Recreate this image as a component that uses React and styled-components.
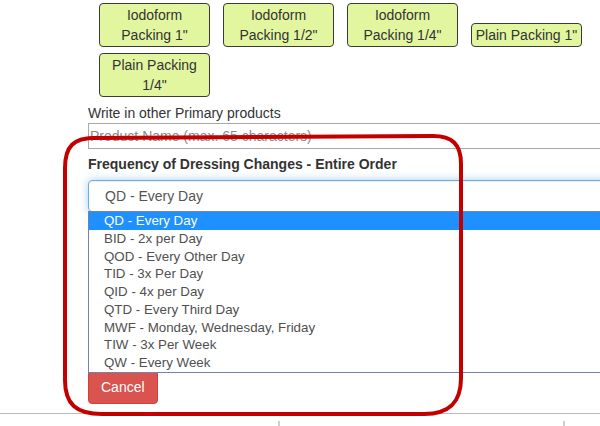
import React from "react";
import styled, { createGlobalStyle } from "styled-components";

const GlobalStyle = createGlobalStyle`
  html, body {
    margin: 0;
    padding: 0;
    background: #fff;
    overflow: hidden;
  }
  body {
    font-family: "Liberation Sans", Arial, sans-serif;
    font-size: 14px;
    line-height: 20px;
    color: #333;
  }
  * { box-sizing: border-box; }
`;

const Page = styled.div`
  position: relative;
  width: 600px;
  height: 426px;
  overflow: hidden;
`;

const Content = styled.div`
  padding: 3px 0 0 88px;
  width: 720px;
`;

const ButtonGrid = styled.div`
  display: flex;
  flex-wrap: wrap;
  align-items: flex-end;
  gap: 6px 13px;
  margin-left: 11px;
  width: 500px;
`;

const ProductButton = styled.div`
  width: 111px;
  padding: 1px 3px;
  border: 1px solid #3a3a3a;
  border-radius: 4px;
  background: #e2f6a0;
  color: #333;
  font-size: 14px;
  line-height: 20px;
  text-align: center;
`;

const FieldLabel = styled.div`
  margin-top: ${(p) => p.$top}px;
  font-size: 14px;
  line-height: 20px;
  font-weight: ${(p) => (p.$bold ? 700 : 400)};
  color: #333;
`;

const TextInput = styled.input`
  display: block;
  width: 560px;
  height: 26px;
  margin-top: 0;
  padding: 1px 1px;
  border: 1px solid #a9a9a9;
  font-family: "Liberation Sans", Arial, sans-serif;
  font-size: 14px;
  color: #333;
  outline: none;
  &::placeholder {
    color: #8a8a8a;
  }
`;

const SelectWrap = styled.div`
  position: relative;
  margin-top: 6px;
  width: 560px;
`;

const SelectBox = styled.div`
  height: 32px;
  padding-left: 16px;
  border: 1px solid #66afe9;
  border-radius: 4px;
  box-shadow: inset 0 1px 1px rgba(0, 0, 0, 0.075), 0 0 8px rgba(102, 175, 233, 0.6);
  font-size: 14px;
  line-height: 30px;
  color: #555;
`;

const DropdownList = styled.ul`
  position: absolute;
  top: calc(100% - 1px);
  left: 0;
  right: 0;
  margin: 0;
  padding: 0;
  list-style: none;
  background: #fff;
  border: 1px solid #7083a8;
  z-index: 3;
`;

const OptionItem = styled.li`
  height: 17.75px;
  padding-left: 15px;
  font-size: 13.333px;
  line-height: 17.75px;
  white-space: nowrap;
  background: ${(p) => (p.$selected ? "#1e90ff" : "transparent")};
  color: ${(p) => (p.$selected ? "#fff" : "#505050")};
`;

const CancelButton = styled.button`
  display: block;
  margin-top: 158px;
  height: 34px;
  padding: 6px 12px;
  border: 1px solid #d43f3a;
  border-radius: 4px;
  background: #d9534f;
  color: #fff;
  font-family: "Liberation Sans", Arial, sans-serif;
  font-size: 14px;
  line-height: 20px;
`;

const Divider = styled.div`
  margin-top: 9px;
  height: 1px;
  background: #bbb;
`;

const FooterRow = styled.div`
  display: grid;
  grid-template-columns: 278px 285px 1fr;
  margin-top: 7px;
  height: 12px;
`;

const FooterCell = styled.div`
  border-left: ${(p) => (p.$first ? "none" : "2px solid #cfcfcf")};
`;

const Annotation = styled.svg`
  position: absolute;
  top: 0;
  left: 0;
  width: 600px;
  height: 426px;
  pointer-events: none;
  z-index: 10;
`;

const products = [
  "Iodoform Packing 1\"",
  "Iodoform Packing 1/2\"",
  "Iodoform Packing 1/4\"",
  "Plain Packing 1\"",
  "Plain Packing 1/4\"",
];

const frequencies = [
  "QD - Every Day",
  "BID - 2x per Day",
  "QOD - Every Other Day",
  "TID - 3x Per Day",
  "QID - 4x per Day",
  "QTD - Every Third Day",
  "MWF - Monday, Wednesday, Friday",
  "TIW - 3x Per Week",
  "QW - Every Week",
];

export default function App() {
  return (
    <Page>
      <GlobalStyle />
      <Content>
        <ButtonGrid>
          {products.map((p) => (
            <ProductButton key={p}>{p}</ProductButton>
          ))}
        </ButtonGrid>
        <FieldLabel $top={6}>Write in other Primary products</FieldLabel>
        <TextInput placeholder="Product Name (max. 65 characters)" readOnly />
        <FieldLabel $top={5} $bold>
          Frequency of Dressing Changes - Entire Order
        </FieldLabel>
        <SelectWrap>
          <SelectBox>QD - Every Day</SelectBox>
          <DropdownList>
            {frequencies.map((f, i) => (
              <OptionItem key={f} $selected={i === 0}>
                {f}
              </OptionItem>
            ))}
          </DropdownList>
        </SelectWrap>
        <CancelButton>Cancel</CancelButton>
      </Content>
      <Divider />
      <FooterRow>
        <FooterCell $first />
        <FooterCell />
        <FooterCell />
      </FooterRow>
      <Annotation viewBox="0 0 600 426">
        <path
          d="M 94 138 L 433 136 C 452 136 461 144 461 164 L 461 378 C 461 402 450 414 424 414 L 102 414 C 76 414 65 404 65 380 L 65 168 C 65 146 74 138 94 138 Z"
          fill="none"
          stroke="#c20000"
          strokeWidth="4"
          strokeLinejoin="round"
        />
      </Annotation>
    </Page>
  );
}
